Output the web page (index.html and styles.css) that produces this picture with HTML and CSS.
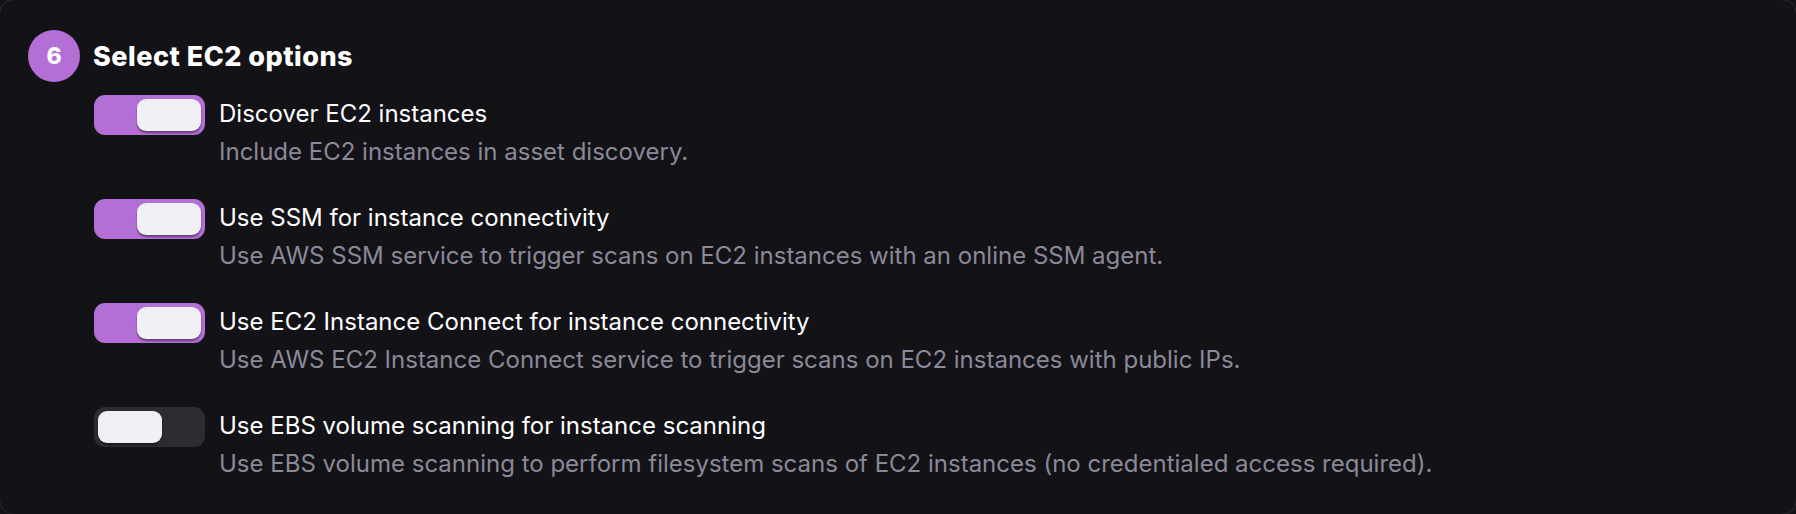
FILE: index.html
```html
<!DOCTYPE html>
<html lang="en">
<head>
<meta charset="utf-8">
<title>Select EC2 options</title>
<link rel="stylesheet" href="styles.css">
</head>
<body>
<section class="card">
  <div class="step-header">
    <span class="step-badge">6</span>
    <h2 class="step-title">Select EC2 options</h2>
  </div>
  <div class="options">
    <div class="option">
      <span class="toggle toggle-on"><span class="knob"></span></span>
      <div class="option-text">
        <div class="option-label">Discover EC2 instances</div>
        <div class="option-desc">Include EC2 instances in asset discovery.</div>
      </div>
    </div>
    <div class="option">
      <span class="toggle toggle-on"><span class="knob"></span></span>
      <div class="option-text">
        <div class="option-label">Use SSM for instance connectivity</div>
        <div class="option-desc">Use AWS SSM service to trigger scans on EC2 instances with an online SSM agent.</div>
      </div>
    </div>
    <div class="option">
      <span class="toggle toggle-on"><span class="knob"></span></span>
      <div class="option-text">
        <div class="option-label">Use EC2 Instance Connect for instance connectivity</div>
        <div class="option-desc">Use AWS EC2 Instance Connect service to trigger scans on EC2 instances with public IPs.</div>
      </div>
    </div>
    <div class="option">
      <span class="toggle toggle-off"><span class="knob"></span></span>
      <div class="option-text">
        <div class="option-label">Use EBS volume scanning for instance scanning</div>
        <div class="option-desc">Use EBS volume scanning to perform filesystem scans of EC2 instances (no credentialed access required).</div>
      </div>
    </div>
  </div>
</section>
</body>
</html>
```

FILE: styles.css
```css
html, body {
  margin: 0;
  padding: 0;
  background: #131217;
  overflow: hidden;
}

body {
  font-family: Inter, "Noto Sans", sans-serif;
  color: #ffffff;
}

.card {
  box-sizing: border-box;
  width: 1798px;
  height: 516px;
  margin: -1px;
  border: 1px solid #2c2b33;
  border-radius: 15px;
  background: #131217;
  padding: 30px 0 0 28px;
}

.step-header {
  display: flex;
  align-items: center;
  gap: 13px;
}

.step-badge {
  width: 52px;
  height: 52px;
  border-radius: 50%;
  background: #b46fd6;
  color: #ffffff;
  font-weight: 800;
  font-size: 23px;
  display: flex;
  align-items: center;
  justify-content: center;
}

.step-title {
  margin: 0;
  font-size: 27px;
  font-weight: 800;
  letter-spacing: 0.5px;
}

.options {
  display: flex;
  flex-direction: column;
  gap: 28px;
  margin: 13px 0 0 66px;
}

.option {
  display: flex;
  align-items: flex-start;
  gap: 14px;
}

.toggle {
  box-sizing: border-box;
  flex: none;
  width: 111px;
  height: 40px;
  border-radius: 11px;
  padding: 4px;
  display: flex;
}

.toggle-on {
  background: #b46fd6;
  justify-content: flex-end;
}

.toggle-off {
  background: #2d2c33;
  justify-content: flex-start;
}

.knob {
  width: 64px;
  height: 32px;
  border-radius: 9px;
  background: #f0eff4;
  box-shadow: 0 2px 2px rgba(0, 0, 0, 0.45);
}

.option-text {
  display: flex;
  flex-direction: column;
}

.option-label {
  font-size: 24px;
  line-height: 38px;
  color: #ffffff;
}

.option-desc {
  font-size: 24px;
  line-height: 38px;
  color: #8b8998;
}
```
